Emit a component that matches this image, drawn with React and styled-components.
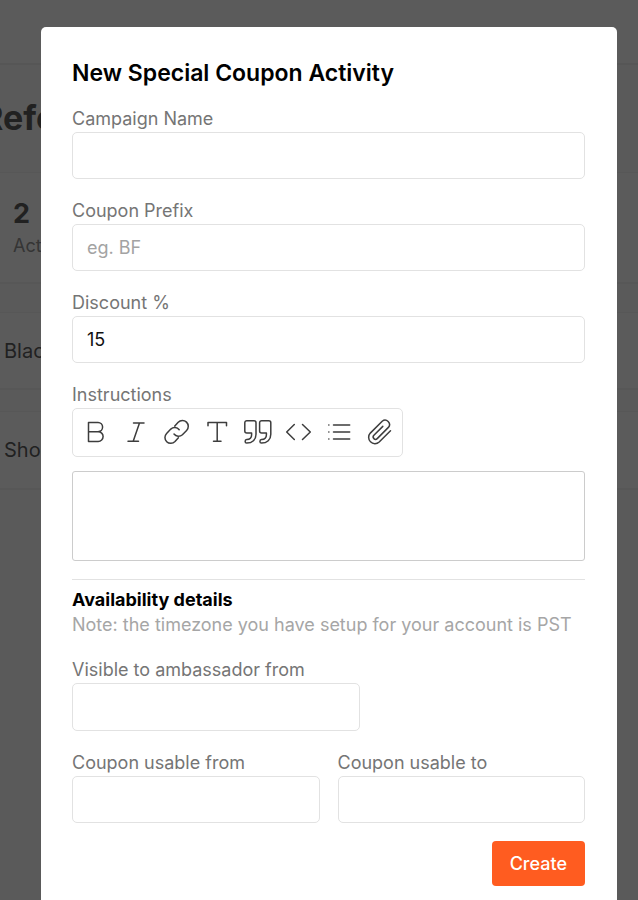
import React, { useState } from 'react';
import styled, { createGlobalStyle } from 'styled-components';

const GlobalStyle = createGlobalStyle`
  *, *::before, *::after { box-sizing: border-box; }
  body {
    margin: 0;
    overflow: hidden;
    background: #f8f8f8;
    color: #000;
    font-family: Inter, "Liberation Sans", sans-serif;
  }
  button, input { font-family: inherit; }
`;

const Page = styled.div`
  min-height: 100vh;
`;

const TopBar = styled.header`
  height: 65px;
  background: #fcfcfc;
  border-bottom: 2px solid #efefef;
`;

const PageTitle = styled.h1`
  margin: 0 0 32px -19px;
  padding-top: 31px;
  font-size: 34px;
  line-height: 44px;
  font-weight: 700;
  color: #5c5c5c;
`;

const Card = styled.section`
  height: ${(p) => p.$height}px;
  margin-bottom: ${(p) => p.$gap}px;
  padding: ${(p) => (p.$summary ? '23px 13px' : '0 4px')};
  display: flex;
  flex-direction: column;
  justify-content: ${(p) => (p.$summary ? 'flex-start' : 'center')};
  background: #fcfcfc;
  border: solid #f2f2f2;
  border-width: 1px 0 2px;
  font-size: 20px;
  color: #5c5c5c;
`;

const Count = styled.strong`
  font-size: 27px;
  line-height: 36px;
  font-weight: 700;
`;

const CountLabel = styled.span`
  font-size: 18px;
  line-height: 28px;
  color: #929292;
`;

const Overlay = styled.div`
  position: fixed;
  inset: 0;
  padding: 27px 21px 0 41px;
  overflow: hidden;
  background: rgba(0, 0, 0, 0.64);
`;

const Dialog = styled.form`
  max-width: 640px;
  min-height: 100%;
  margin: 0 auto;
  padding: 31px 32px 32px 31px;
  display: flex;
  flex-direction: column;
  background: #fff;
  border-radius: 5px;
`;

const Title = styled.h2`
  margin: 0 0 16px;
  font-size: 23px;
  line-height: 30px;
  font-weight: 600;
`;

const Field = styled.div`
  display: flex;
  flex-direction: column;
  min-width: 0;
  width: ${(p) => p.$width || 'auto'};
  max-width: 100%;
  margin-bottom: 17px;
`;

const Label = styled.label`
  padding-top: 2px;
  font-size: 18px;
  line-height: 26px;
  color: #757575;
`;

const Input = styled.input`
  width: 100%;
  height: ${(p) => (p.$tall ? 48 : 47)}px;
  padding: 0 14px;
  border: 1px solid #e2e2e2;
  border-radius: 5px;
  background: #fff;
  color: #111;
  font-size: 18px;
  outline: none;
  &::placeholder { color: #a3a3a3; opacity: 1; }
  &:focus { border-color: #999; }
`;

const Toolbar = styled.div`
  align-self: flex-start;
  width: 331px;
  max-width: 100%;
  height: 49px;
  padding: 0 3px 2px;
  display: flex;
  align-items: center;
  justify-content: space-between;
  border: 1px solid #e2e2e2;
  border-radius: 5px;
`;

const ToolButton = styled.button`
  width: 40px;
  height: 40px;
  padding: 0;
  display: flex;
  align-items: center;
  justify-content: center;
  border: 0;
  background: none;
  color: #3d3d3d;
  cursor: pointer;
`;

const Icon = styled.svg`
  width: 32px;
  height: 32px;
  fill: none;
  stroke: currentColor;
  stroke-width: 1.5;
  stroke-linecap: round;
  stroke-linejoin: round;
`;

const Editor = styled.div`
  height: 90px;
  margin-top: 14px;
  padding: 12px 14px;
  border: 1px solid #ccc;
  border-radius: 3px;
  font-size: 18px;
  line-height: 24px;
  overflow: auto;
  outline: none;
`;

const Divider = styled.hr`
  width: 100%;
  height: 1px;
  margin: 1px 0 7px;
  border: 0;
  background: #e2e2e2;
`;

const SectionTitle = styled.h3`
  margin: 0;
  font-size: 18px;
  line-height: 25px;
  font-weight: 700;
`;

const Note = styled.p`
  margin: 0 0 18px;
  font-size: 18px;
  line-height: 25px;
  color: #a6a6a6;
`;

const FieldRow = styled.div`
  display: grid;
  grid-template-columns: 1fr 1fr;
  gap: 18px;
`;

const Actions = styled.div`
  display: flex;
  justify-content: flex-end;
`;

const CreateButton = styled.button`
  height: 45px;
  margin-top: 1px;
  padding: 0 18px;
  border: 0;
  border-radius: 4px;
  background: #ff5c20;
  color: #fff;
  font-size: 18px;
  font-weight: 500;
  cursor: pointer;
`;

const quoteMark =
  'M9.6 16.9H4.8a2 2 0 0 1-2-2V6.7a2 2 0 0 1 2-2h7.2a2 2 0 0 1 2 2v11.5c0 5.4-3.7 8.9-9.3 8.9-2.1 0-2.1-3.3 0-3.5 3.3-.3 4.9-2 4.9-4.7v-2Z';

const tools = [
  ['Bold', <path d="M8.5 6.5H18a4.6 4.6 0 0 1 0 9.2H8.5V6.5ZM8.5 15.7h9.7a4.9 4.9 0 0 1 0 9.8H8.5v-9.8Z" />],
  ['Italic', <path d="M13.5 7H24M8 25.2h10.5M19.5 7l-6.3 18.2" />],
  ['Link', <path d="M13.8 10 17.2 6.2a5.8 5.8 0 0 1 8.4 8.2l-4.2 4.3a5.8 5.8 0 0 1-8.4-.6M17.4 21.8 14 25.6a5.8 5.8 0 0 1-8.4-8.2l4.2-4.3a5.8 5.8 0 0 1 8.4.6" />],
  ['Text', <path d="M7 9.8V6.5h18.5v3.3M16.2 6.5v18.7M12.5 25.2H20" />],
  ['Quote', (
    <>
      <path d={quoteMark} />
      <path d={quoteMark} transform="translate(14.8 0)" />
    </>
  )],
  ['Code', <path d="M12.3 8.5 4.7 16l7.6 7.5M20.5 8.5l7.8 7.5-7.8 7.5" />],
  ['Bulleted list', <path d="M10.5 9h16.2M10.5 16h16.2M10.5 23h16.2M5.8 9h.1M5.8 16h.1M5.8 23h.1" />],
  ['Attachment', <path d="M27.5 14.7 16.2 26a6.3 6.3 0 0 1-8.9-8.9L19.2 5.2a4.4 4.4 0 0 1 6.2 6.2L14.2 22.6a2.3 2.3 0 0 1-3.3-3.3l8.9-8.9" />],
];

function TextField({ id, label, width, tall, ...rest }) {
  return (
    <Field $width={width}>
      <Label htmlFor={id}>{label}</Label>
      <Input id={id} name={id} type="text" $tall={tall} {...rest} />
    </Field>
  );
}

export default function App() {
  const [discount, setDiscount] = useState('15');
  return (
    <>
      <GlobalStyle />
      <Page aria-hidden="true">
        <TopBar />
        <PageTitle>Refe</PageTitle>
        <Card $summary $height={112} $gap={28}>
          <Count>2</Count>
          <CountLabel>Act</CountLabel>
        </Card>
        <Card $height={78} $gap={21}>Blac</Card>
        <Card $height={79} $gap={0}>Sho</Card>
      </Page>
      <Overlay>
        <Dialog role="dialog" aria-labelledby="dialog-title" onSubmit={(e) => e.preventDefault()}>
          <Title id="dialog-title">New Special Coupon Activity</Title>
          <TextField id="campaign" label="Campaign Name" />
          <TextField id="prefix" label="Coupon Prefix" placeholder="eg. BF" />
          <TextField
            id="discount"
            label="Discount %"
            value={discount}
            onChange={(e) => setDiscount(e.target.value)}
          />
          <Field>
            <Label as="span" id="instructions-label">Instructions</Label>
            <Toolbar role="toolbar" aria-label="Formatting">
              {tools.map(([name, drawing]) => (
                <ToolButton key={name} type="button" aria-label={name}>
                  <Icon viewBox="0 0 32 32" aria-hidden="true">{drawing}</Icon>
                </ToolButton>
              ))}
            </Toolbar>
            <Editor
              contentEditable
              suppressContentEditableWarning
              role="textbox"
              aria-multiline="true"
              aria-labelledby="instructions-label"
            />
          </Field>
          <Divider />
          <SectionTitle>Availability details</SectionTitle>
          <Note>Note: the timezone you have setup for your account is PST</Note>
          <TextField id="visible-from" label="Visible to ambassador from" width="288px" tall />
          <FieldRow>
            <TextField id="usable-from" label="Coupon usable from" />
            <TextField id="usable-to" label="Coupon usable to" />
          </FieldRow>
          <Actions>
            <CreateButton type="submit">Create</CreateButton>
          </Actions>
        </Dialog>
      </Overlay>
    </>
  );
}
